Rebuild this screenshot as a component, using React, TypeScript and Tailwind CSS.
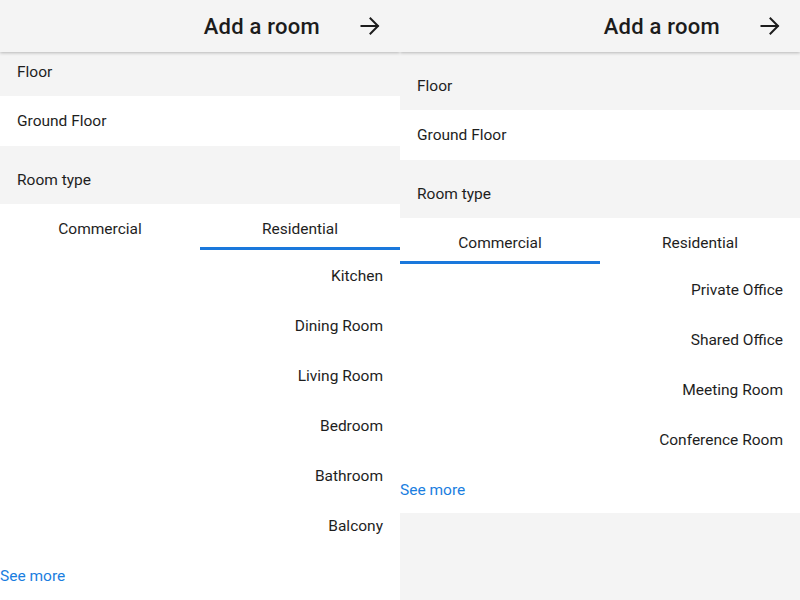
import { useState } from "react";

const residential = ["Kitchen", "Dining Room", "Living Room", "Bedroom", "Bathroom", "Balcony"];
const commercial = ["Private Office", "Shared Office", "Meeting Room", "Conference Room"];

function Arrow() {
  return (
    <svg width="20" height="20" viewBox="0 0 20 20" fill="none" stroke="#1c1c1c" strokeWidth="2" strokeLinecap="square">
      <path d="M1.5 10h16" />
      <path d="M10.5 2.5 18 10l-7.5 7.5" />
    </svg>
  );
}

function Panel({ initialTab, scroll }: { initialTab: "commercial" | "residential"; scroll?: boolean }) {
  const [tab, setTab] = useState(initialTab);
  const items = tab === "residential" ? residential : commercial;

  return (
    <div className="w-[400px] h-[600px] flex flex-col bg-[#f4f4f4] overflow-hidden">
      <header className="relative z-10 h-[52px] shrink-0 flex items-center justify-end bg-[#f4f4f4] shadow-[0_1px_3px_rgba(0,0,0,0.25)] pr-[20px]">
        <h1 className="text-[22px] font-medium text-[#1c1c1c] mr-[40px] tracking-[0.25px]">Add a room</h1>
        <Arrow />
      </header>

      <div className="flex-1 overflow-hidden">
        <div className={scroll ? "-mt-[14px]" : ""}>
          <div className="h-[58px] flex items-end pb-[12px] pl-[17px]">Floor</div>
          <div className="h-[50px] flex items-center pt-[2px] pl-[17px] bg-white">Ground Floor</div>
          <div className="h-[58px] flex items-end pb-[12px] pl-[17px]">Room type</div>

          <div className="bg-white">
            <div className="flex h-[46px]">
              {(["commercial", "residential"] as const).map(t => (
                <button
                  key={t}
                  onClick={() => setTab(t)}
                  className={`flex-1 flex items-start justify-center pt-[14px] border-b-[3px] ${tab === t ? "border-[#1a78dc]" : "border-transparent"}`}
                >
                  {t === "commercial" ? "Commercial" : "Residential"}
                </button>
              ))}
            </div>
            <ul className="pt-[2px]">
              {items.map(i => (
                <li key={i} className="h-[50px] flex items-center justify-end pr-[17px]">{i}</li>
              ))}
            </ul>
            <a href="#" className="h-[47px] flex items-center pt-[2px] text-[#1a7ee0]">See more</a>
            {scroll && <div className="h-[20px]" />}
          </div>
        </div>
      </div>
    </div>
  );
}

export default function App() {
  return (
    <div className="flex w-[800px] h-[600px] text-[15.5px] text-[#1e1e1e] font-['Roboto',sans-serif]">
      <Panel initialTab="residential" scroll />
      <Panel initialTab="commercial" />
    </div>
  );
}
